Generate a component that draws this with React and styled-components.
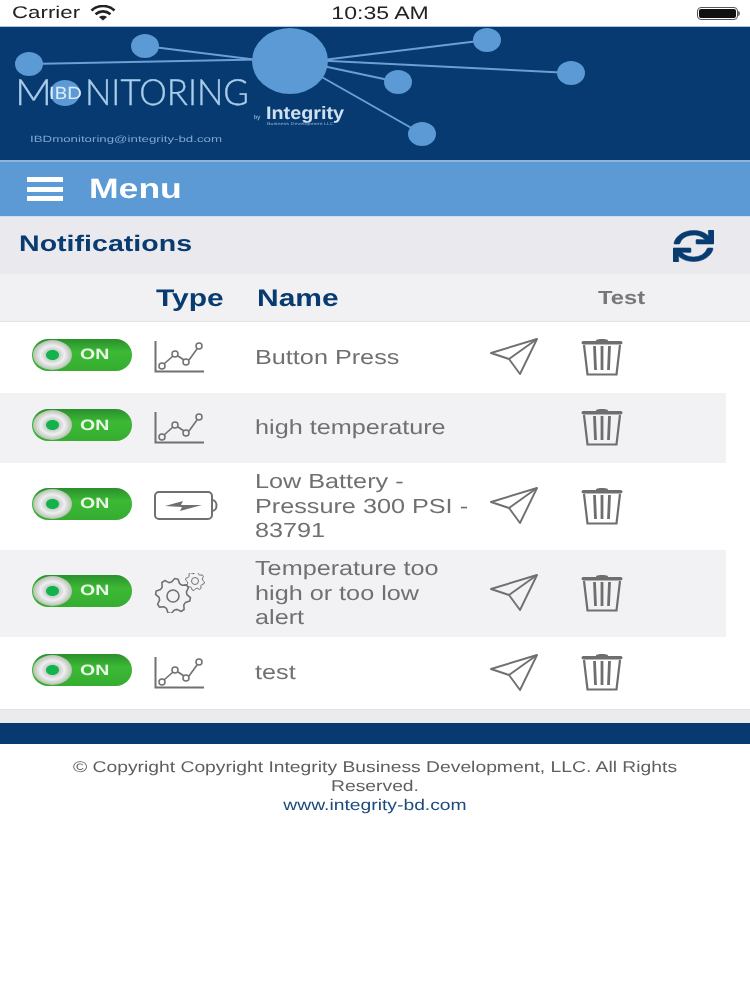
import React from 'react';
import styled, { createGlobalStyle } from 'styled-components';
import { FaSync } from 'react-icons/fa';

const Global = createGlobalStyle`
    html, body {
        margin: 0;
        padding: 0;
        background: #fff;
        font-family: "Liberation Sans", Arial, sans-serif;
        text-rendering: geometricPrecision;
    }
    * {
        box-sizing: border-box;
    }
`
const StatusBar = styled.div`
    height: 27px;
    display: grid;
    grid-template-columns: 1fr auto 1fr;
    align-items: center;
    padding: 0 12px;
    color: #222;
    border-bottom: 1px solid #a9c6e4;
`
const Carrier = styled.div`
    display: flex;
    align-items: center;
    gap: 26px;
    font-size: 17px;
`
const CarrierName = styled.span`
    transform: scaleX(1.31);
    transform-origin: left;
`
const Clock = styled.div`
    font-size: 18px;
    transform: scaleX(1.28);
    margin-left: 10px;
`
const BatteryShell = styled.div`
    justify-self: end;
    width: 41px;
    height: 13px;
    border: 1px solid #555;
    border-radius: 4px;
    padding: 1px;
    position: relative;
    &::before {
        content: '';
        display: block;
        height: 100%;
        background: #111;
        border-radius: 2px;
    }
    &::after {
        content: '';
        position: absolute;
        right: -3px;
        top: 3px;
        width: 2px;
        height: 5px;
        background: #777;
        border-radius: 0 2px 2px 0;
    }
`
const Banner = styled.div`
    height: 135px;
    background: #063a70;
    border-bottom: 2px solid #8fb4db;
`
const LogoArt = styled.svg`
    display: block;
    filter: blur(0.5px);
`
const MenuBar = styled.div`
    height: 55px;
    background: #5b9ad5;
    display: flex;
    align-items: center;
    gap: 26px;
    padding-left: 27px;
    border-bottom: 1px solid #cfe0f3;
`
const MenuLabel = styled.div`
    color: #fff;
    font-size: 28px;
    font-weight: bold;
    transform: scaleX(1.27);
    transform-origin: left;
`
const Burger = styled.div`
    width: 36px;
    height: 24px;
    display: flex;
    flex-direction: column;
    justify-content: space-between;
    span {
        height: 5px;
        background: #fff;
    }
`
const TitleBar = styled.div`
    height: 57px;
    background: #eaeaee;
    display: flex;
    align-items: center;
    justify-content: space-between;
    padding: 0 36px 4px 19px;
    color: #083b70;
`
const Title = styled.div`
    font-size: 22.5px;
    font-weight: bold;
    transform: scaleX(1.27);
    transform-origin: left;
`
const RefreshWrap = styled.div`
    display: flex;
    padding-top: 4px;
    svg {
        width: 41px;
        height: 32px;
        stroke: currentColor;
        stroke-width: 8px;
    }
`
const HeadRow = styled.div`
    height: 48px;
    background: #f1f1f3;
    border-bottom: 1px solid #e4e4e6;
    display: grid;
    grid-template-columns: 156px 101px 341px 1fr;
    align-items: center;
`
const HeadCell = styled.div`
    grid-column: ${p => p.$col};
    justify-self: start;
    font-size: ${p => p.$muted ? '19px' : '24px'};
    font-weight: bold;
    color: ${p => p.$muted ? '#777' : '#083b70'};
    transform: scaleX(1.25);
    transform-origin: left;
    padding-top: 2px;
`
const Rows = styled.div`
    width: 726px;
`
const Row = styled.div`
    height: ${p => p.$h}px;
    background: ${p => p.$shade ? '#f2f2f4' : '#fff'};
    display: grid;
    grid-template-columns: 154px 101px 235px 91px 1fr;
    align-items: center;
`
const Toggle = styled.div`
    margin: 0 0 6px 32px;
    width: 100px;
    height: 32px;
    border-radius: 16px;
    background: linear-gradient(#2a8f2c, #3cb935 40%, #35ad30);
    display: flex;
    align-items: center;
    gap: 8px;
    padding-left: 1px;
`
const ToggleLabel = styled.span`
    color: #e9f6e7;
    font-size: 15px;
    font-weight: bold;
    transform: scaleX(1.3);
    transform-origin: left;
`
const Knob = styled.div`
    width: 39px;
    height: 30px;
    border-radius: 50%;
    background: radial-gradient(ellipse, #12b34a 0 6px, #c8d0cc 7px, #efefef 12px, #b9c4b6 19px);
    flex: none;
`
const RowName = styled.div`
    width: 175px;
    padding-top: 1px;
    font-size: 20.5px;
    line-height: 24.5px;
    color: #707070;
    transform: scaleX(1.23);
    transform-origin: left;
`
const IconCell = styled.div`
    display: flex;
    margin-bottom: 2px;
`
const Band = styled.div`
    height: 14px;
    background: #ebebee;
    border-top: 1px solid #e3e3e5;
`
const FooterBar = styled.div`
    height: 21px;
    background: #063a70;
`
const Footer = styled.div`
    width: 522px;
    margin: 0 auto;
    text-align: center;
    padding-top: 14px;
    font-size: 15.5px;
    line-height: 19px;
    color: #5f5f5f;
    transform: scaleX(1.245);
`
const SiteLink = styled.div`
    color: #1d4a7d;
`

const gearPath = (cx, cy, r, teeth) => {
    const pts = [];
    const n = teeth * 4;
    for (let i = 0; i < n; i++) {
        const a = (i + 0.5) / n * Math.PI * 2;
        const rad = (i % 4 === 0 || i % 4 === 1) ? r : r * 0.8;
        pts.push(`${(cx + Math.cos(a) * rad).toFixed(2)} ${(cy + Math.sin(a) * rad).toFixed(2)}`);
    }
    return `M${pts.join('L')}Z`;
};

const WifiIcon = () => (
    <svg width="26" height="16" viewBox="0 0 26 16" fill="none" stroke="#222" strokeWidth="2.6">
        <path d="M1.5 5.5C8 -0.5 18 -0.5 24.5 5.5" />
        <path d="M5.5 9.2C10 5.4 16 5.4 20.5 9.2" />
        <path d="M13 15.5L9 12C11 10.4 15 10.4 17 12Z" fill="#222" stroke="none" />
    </svg>
);

const Logo = () => (
    <LogoArt width="750" height="133" viewBox="0 0 750 133">
        <g stroke="#6aa0d6" strokeWidth="2">
            <line x1="29" y1="37" x2="290" y2="32" />
            <line x1="145" y1="19" x2="290" y2="37" />
            <line x1="487" y1="13" x2="290" y2="37" />
            <line x1="571" y1="46" x2="290" y2="32" />
            <line x1="398" y1="55" x2="290" y2="32" />
            <line x1="422" y1="107" x2="290" y2="32" />
        </g>
        <g fill="#5b9ad5">
            <ellipse cx="29" cy="37" rx="14" ry="12" />
            <ellipse cx="145" cy="19" rx="14" ry="12" />
            <ellipse cx="290" cy="34" rx="38" ry="33" />
            <ellipse cx="487" cy="13" rx="14" ry="12" />
            <ellipse cx="571" cy="46" rx="14" ry="12" />
            <ellipse cx="398" cy="55" rx="14" ry="12" />
            <ellipse cx="422" cy="107" rx="14" ry="12" />
            <ellipse cx="65" cy="66" rx="15" ry="13" />
        </g>
        <g fontFamily="Lato, sans-serif" fontWeight="300" fill="#a9cdea" stroke="#a9cdea" strokeWidth="0.4">
            <text x="15" y="78" fontSize="36" textLength="37" lengthAdjust="spacingAndGlyphs">M</text>
            <text x="85" y="78" fontSize="36" textLength="164" lengthAdjust="spacingAndGlyphs">NITORING</text>
        </g>
        <text x="49" y="72" fontFamily="Lato, sans-serif" fontWeight="400" fontSize="17" fill="#dcebf7" textLength="33" lengthAdjust="spacingAndGlyphs">IBD</text>
        <text x="254" y="92" fontFamily="'Liberation Sans', sans-serif" fontSize="6" fill="#a9cdea">by</text>
        <text x="266" y="92" fontFamily="'Liberation Sans', sans-serif" fontWeight="700" fontSize="18" fill="#cfe0f1" textLength="78" lengthAdjust="spacingAndGlyphs">Integrity</text>
        <text x="267" y="98" fontFamily="'Liberation Sans', sans-serif" fontSize="4" fill="#8fb4db" textLength="67" lengthAdjust="spacingAndGlyphs">Business Development LLC</text>
        <text x="30" y="115" fontFamily="'Liberation Sans', sans-serif" fontSize="9" fill="#7fa6d0" textLength="192" lengthAdjust="spacingAndGlyphs">IBDmonitoring@integrity-bd.com</text>
    </LogoArt>
);

const ChartIcon = () => (
    <svg width="50" height="33" viewBox="0 0 50 33" fill="none" stroke="#707070">
        <path d="M1.5 1V31.5H50" strokeWidth="2" />
        <path d="M10 24L19 16M24 16L30 20M35 20L43 9" strokeWidth="1.6" />
        <circle cx="8" cy="26" r="3" strokeWidth="1.5" />
        <circle cx="21" cy="14" r="3" strokeWidth="1.5" />
        <circle cx="32" cy="22" r="3" strokeWidth="1.5" />
        <circle cx="45" cy="6" r="3" strokeWidth="1.5" />
    </svg>
);

const BatteryIcon = () => (
    <svg width="64" height="29" viewBox="0 0 64 29" fill="none" stroke="#707070">
        <rect x="1" y="1" width="57" height="27" rx="4" strokeWidth="2" />
        <path d="M58 9C64 9 64 20 58 20" strokeWidth="2" />
        <path d="M11 15L29 10L27 14L48 14L26 20L28 16Z" fill="#707070" stroke="none" />
    </svg>
);

const GearsIcon = () => (
    <svg width="52" height="40" viewBox="0 0 52 40" fill="none" stroke="#707070" strokeWidth="1.6" strokeLinejoin="round">
        <path d={gearPath(19, 23, 17.5, 8)} />
        <circle cx="19" cy="23" r="6" />
        <path d={gearPath(41, 8, 9.5, 8)} strokeWidth="1" />
        <circle cx="41" cy="8" r="3.5" strokeWidth="1" />
    </svg>
);

const TYPE_ICONS = { chart: ChartIcon, battery: BatteryIcon, gears: GearsIcon };

const SendIcon = () => (
    <svg width="49" height="37" viewBox="0 0 49 37" fill="none" stroke="#707070" strokeWidth="1.9" strokeLinejoin="round">
        <path d="M47 1L1 15L19 21L30 36Z" />
        <path d="M47 1L19 21" />
    </svg>
);

const TrashIcon = () => (
    <svg width="42" height="38" viewBox="0 0 42 38" fill="none" stroke="#6e6e6e">
        <path d="M15 2.5C15 0.5 27 0.5 27 2.5V4H15Z" fill="#6e6e6e" stroke="none" />
        <rect x="0.5" y="3" width="41" height="3.6" rx="1.8" fill="#6e6e6e" stroke="none" />
        <path d="M3 7L6.5 36.5H35.5L39 7" strokeWidth="2.2" />
        <path d="M13.5 8L14.5 32M21 8V32M28.5 8L27.5 32" strokeWidth="2.8" />
    </svg>
);

const NOTIFICATIONS = [
    { name: 'Button Press', type: 'chart', h: 71, send: true },
    { name: 'high temperature', type: 'chart', h: 70, send: false },
    { name: 'Low Battery - Pressure 300 PSI - 83791', type: 'battery', h: 87, send: true },
    { name: 'Temperature too high or too low alert', type: 'gears', h: 87, send: true },
    { name: 'test', type: 'chart', h: 72, send: true },
];

export default function App() {
    return (
        <>
            <Global />
            <StatusBar>
                <Carrier><CarrierName>Carrier</CarrierName><WifiIcon /></Carrier>
                <Clock>10:35 AM</Clock>
                <BatteryShell />
            </StatusBar>
            <Banner><Logo /></Banner>
            <MenuBar>
                <Burger><span /><span /><span /></Burger>
                <MenuLabel>Menu</MenuLabel>
            </MenuBar>
            <TitleBar>
                <Title>Notifications</Title>
                <RefreshWrap><FaSync preserveAspectRatio="none" /></RefreshWrap>
            </TitleBar>
            <HeadRow>
                <HeadCell $col={2}>Type</HeadCell>
                <HeadCell $col={3}>Name</HeadCell>
                <HeadCell $col={4} $muted>Test</HeadCell>
            </HeadRow>
            <Rows>
                {NOTIFICATIONS.map((item, i) => {
                    const TypeIcon = TYPE_ICONS[item.type];
                    return (
                        <Row key={item.name} $h={item.h} $shade={i % 2 === 1}>
                            <Toggle><Knob /><ToggleLabel>ON</ToggleLabel></Toggle>
                            <IconCell><TypeIcon /></IconCell>
                            <RowName>{item.name}</RowName>
                            <IconCell>{item.send && <SendIcon />}</IconCell>
                            <IconCell><TrashIcon /></IconCell>
                        </Row>
                    );
                })}
            </Rows>
            <Band />
            <FooterBar />
            <Footer>
                © Copyright Copyright Integrity Business Development, LLC. All Rights Reserved.
                <SiteLink>www.integrity-bd.com</SiteLink>
            </Footer>
        </>
    );
}
